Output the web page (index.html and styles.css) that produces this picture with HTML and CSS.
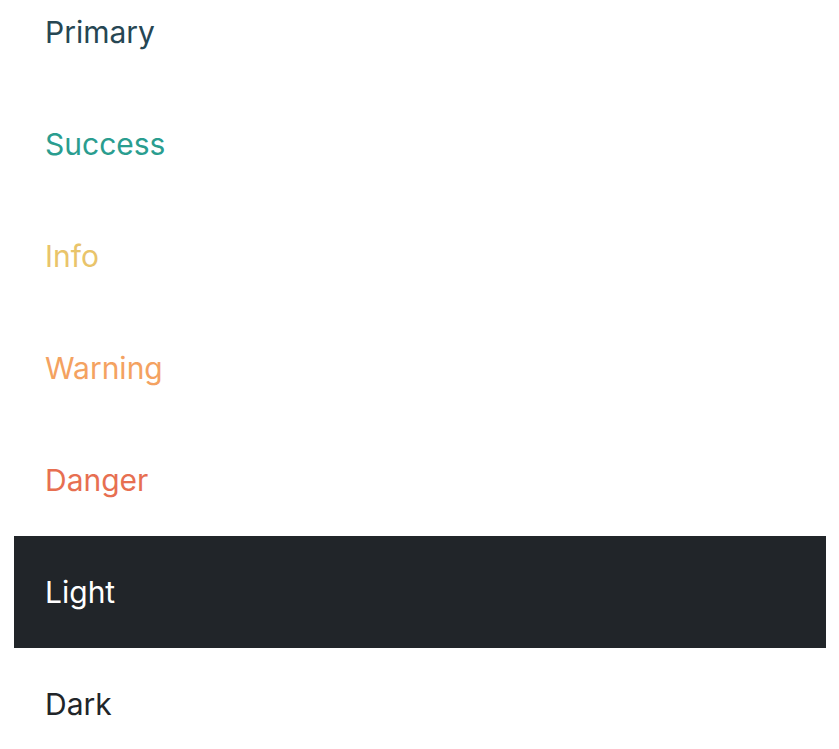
FILE: index.html
```html
<!DOCTYPE html>
<html lang="en">

<head>
  <meta charset="UTF-8" />
  <meta name="viewport" content="width=device-width, initial-scale=1.0" />
  <title>Colors</title>
  <link rel="stylesheet" href="styles.css">
</head>

<body>
  <ul class="color-list">
    <li class="item primary">Primary</li>
    <li class="item success">Success</li>
    <li class="item info">Info</li>
    <li class="item warning">Warning</li>
    <li class="item danger">Danger</li>
    <li class="item light">Light</li>
    <li class="item dark">Dark</li>
  </ul>
</body>

</html>
```

FILE: styles.css
```css
* {
  margin: 0;
  padding: 0;
  box-sizing: border-box;
}

body {
  font-family: Inter, 'Noto Sans', sans-serif;
  background: #fff;
  color: #212529;
}

.color-list {
  list-style: none;
  margin: -24px 13px 0 14px;
}

.item {
  height: 112px;
  display: flex;
  align-items: center;
  padding-left: 31px;
  font-size: 30px;
}

.primary { color: #264653; }
.success { color: #2a9d8f; }
.info { color: #e9c46a; }
.warning { color: #f4a261; }
.danger { color: #e76f51; }

.light {
  background: #212529;
  color: #fff;
}

.dark { color: #212529; }
```
